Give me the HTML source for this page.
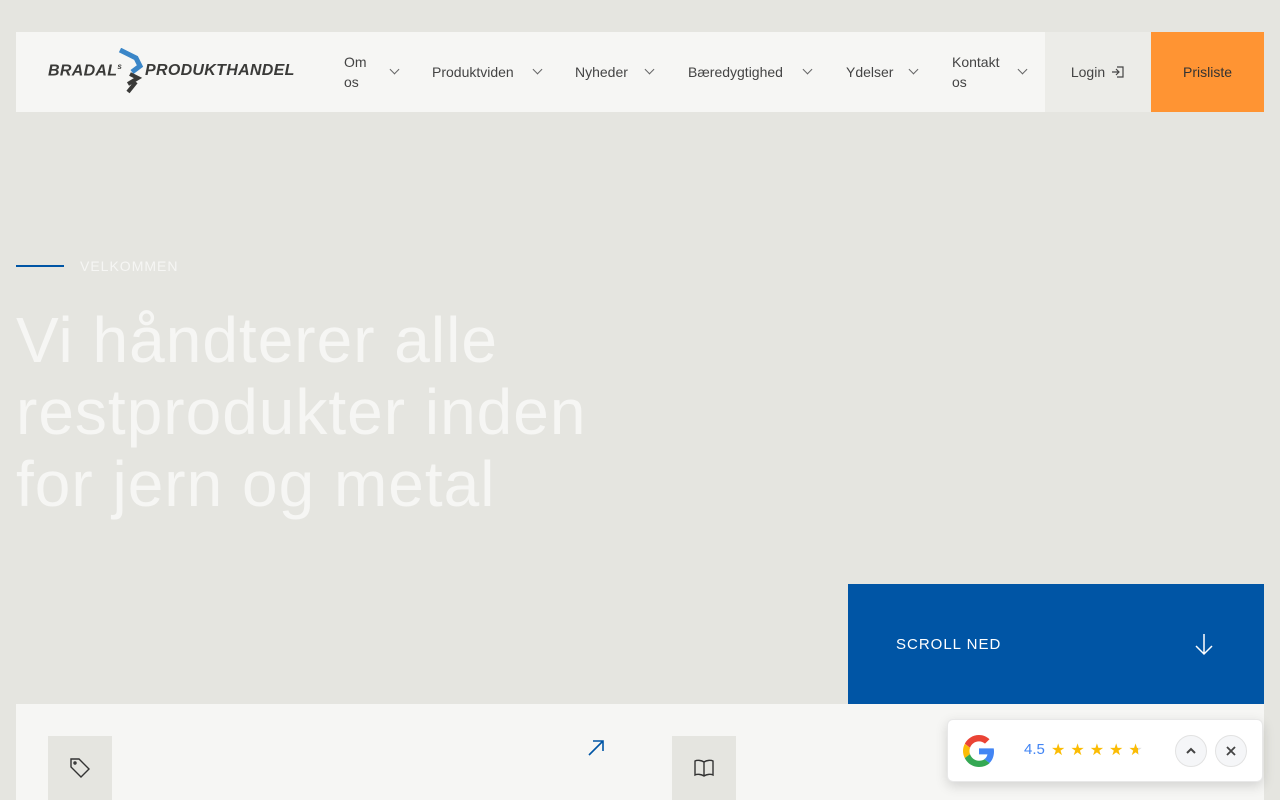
<!DOCTYPE html>
<html><head><meta charset="utf-8"><style>
*{margin:0;padding:0;box-sizing:border-box}
body{width:1280px;height:800px;overflow:hidden;background:#e5e5e0;font-family:"Liberation Sans",sans-serif;position:relative;color:#333}
.hdr{position:absolute;left:16px;top:32px;width:1029px;height:80px;background:#f6f6f4}
.login{position:absolute;left:1045px;top:32px;width:106px;height:80px;background:#ececE8;font-size:14px;color:#444;display:flex;align-items:center;justify-content:center;gap:6px}
.pris{position:absolute;left:1151px;top:32px;width:113px;height:80px;background:#ff9433;color:#333;font-size:14px;display:flex;align-items:center;justify-content:center}
.nav{position:absolute;font-size:14px;color:#444;line-height:20px}
.chev{position:absolute;width:7px;height:7px;border-right:1px solid #666;border-bottom:1px solid #666;transform:rotate(45deg)}
.logo{position:absolute;top:62px;font-weight:bold;font-style:italic;font-size:16px;color:#3a3a38;letter-spacing:0.3px}
</style></head><body>
<div class="hdr"></div>
<div class="logo" style="left:48px">BRADAL<sup style="font-size:8px">s</sup></div>
<svg style="position:absolute;left:116px;top:48px" width="30" height="48"><path d="M4 2 L20 10 L24 18 L16 24" stroke="#3a86c8" stroke-width="5" fill="none"/><path d="M14 26 L22 30 L12 36 M20 34 L12 44" stroke="#3a3a38" stroke-width="4" fill="none"/></svg>
<div class="logo" style="left:145px">PRODUKTHANDEL</div>
<div class="nav" style="left:344px;top:52px">Om<br>os</div><div class="chev" style="left:391px;top:66px"></div>
<div class="nav" style="left:432px;top:62px">Produktviden</div><div class="chev" style="left:534px;top:66px"></div>
<div class="nav" style="left:575px;top:62px">Nyheder</div><div class="chev" style="left:646px;top:66px"></div>
<div class="nav" style="left:688px;top:62px">Bæredygtighed</div><div class="chev" style="left:804px;top:66px"></div>
<div class="nav" style="left:846px;top:62px">Ydelser</div><div class="chev" style="left:910px;top:66px"></div>
<div class="nav" style="left:952px;top:52px">Kontakt<br>os</div><div class="chev" style="left:1019px;top:66px"></div>
<div class="login">Login <svg width="14" height="14" viewBox="0 0 14 14" fill="none" stroke="#444" stroke-width="1.2"><path d="M6 2h6v10H6M1 7h7M5 4l3 3-3 3"/></svg></div>
<div class="pris">Prisliste</div>
<div style="position:absolute;left:16px;top:265px;width:48px;height:2px;background:#0055a5"></div>
<div style="position:absolute;left:80px;top:258px;font-size:14px;letter-spacing:1px;color:#f6f6f4">VELKOMMEN</div>
<div style="position:absolute;left:16px;top:304px;font-size:64px;line-height:72px;color:#f6f6f4;width:760px;letter-spacing:1px">Vi håndterer alle<br>restprodukter inden<br>for jern og metal</div>
<div style="position:absolute;left:848px;top:584px;width:416px;height:120px;background:#0055a5;color:#fff"><div style="position:absolute;left:48px;top:52px;font-size:15px;letter-spacing:1px">SCROLL NED</div>
<svg style="position:absolute;left:346px;top:48px" width="20" height="24" fill="none" stroke="#fff" stroke-width="1.5"><path d="M10 2v20M2 14l8 8 8-8"/></svg></div>
<div style="position:absolute;left:16px;top:704px;width:1248px;height:96px;background:#f6f6f4"></div>
<div style="position:absolute;left:48px;top:736px;width:64px;height:64px;background:#e5e5e0"></div>
<svg style="position:absolute;left:68px;top:756px" width="24" height="24" fill="none" stroke="#333" stroke-width="1.4"><path d="M3 3h8l10 10-8 8L3 11z"/><circle cx="7" cy="7" r="1"/></svg>
<svg style="position:absolute;left:586px;top:738px" width="20" height="20" fill="none" stroke="#0055a5" stroke-width="1.6"><path d="M3 17L17 3M7 3h10v10"/></svg>
<div style="position:absolute;left:672px;top:736px;width:64px;height:64px;background:#e5e5e0"></div>
<svg style="position:absolute;left:693px;top:758px" width="22" height="20" fill="none" stroke="#333" stroke-width="1.4"><path d="M11 4C8 2 4 2 2 3v14c2-1 6-1 9 1 3-2 7-2 9-1V3c-2-1-6-1-9 1zM11 4v14"/></svg>
<div style="position:absolute;left:947px;top:719px;width:316px;height:63px;background:#fff;border-radius:6px;box-shadow:0 4px 12px rgba(0,0,0,.15);border:1px solid #e8e8e8"></div>
<svg style="position:absolute;left:963px;top:735px" width="32" height="32" viewBox="0 0 48 48"><path fill="#EA4335" d="M24 9.5c3.5 0 6.6 1.2 9 3.5l6.7-6.7C35.6 2.4 30.2 0 24 0 14.6 0 6.6 5.4 2.7 13.2l7.8 6C12.4 13.6 17.7 9.5 24 9.5z"/><path fill="#4285F4" d="M46.5 24.5c0-1.600-.1-3.1-.4-4.5H24v9h12.7c-.6 3-2.2 5.5-4.7 7.2l7.6 5.9c4.4-4.1 6.9-10.1 6.9-17.6z"/><path fill="#FBBC05" d="M10.5 28.6c-.5-1.4-.8-3-.8-4.6s.3-3.2.8-4.6l-7.8-6C1 16.6 0 20.2 0 24s1 7.4 2.7 10.8l7.8-6.2z"/><path fill="#34A853" d="M24 48c6.5 0 11.9-2.1 15.9-5.8l-7.6-5.9c-2.1 1.4-4.9 2.3-8.3 2.3-6.3 0-11.6-4.2-13.5-9.9l-7.8 6C6.6 42.6 14.6 48 24 48z"/></svg>
<div style="position:absolute;left:1024px;top:741px;font-size:15px;color:#4285f4">4.5</div>
<div style="position:absolute;left:1051px;top:740px;font-size:16px;color:#fbbc04;letter-spacing:5px">★★★★<span style="background:linear-gradient(90deg,#fbbc04 50%,#ddd 50%);-webkit-background-clip:text;color:transparent">★</span></div>
<div style="position:absolute;left:1175px;top:735px;width:32px;height:32px;border-radius:50%;background:#f5f6f8;border:1px solid #e2e2e2"></div>
<svg style="position:absolute;left:1185px;top:745px" width="12" height="12" fill="none" stroke="#444" stroke-width="2"><path d="M2 8l4-4 4 4"/></svg>
<div style="position:absolute;left:1215px;top:735px;width:32px;height:32px;border-radius:50%;background:#f5f6f8;border:1px solid #e2e2e2"></div>
<svg style="position:absolute;left:1225px;top:745px" width="12" height="12" fill="none" stroke="#444" stroke-width="1.8"><path d="M2 2l8 8M10 2l-8 8"/></svg>
</body></html>
